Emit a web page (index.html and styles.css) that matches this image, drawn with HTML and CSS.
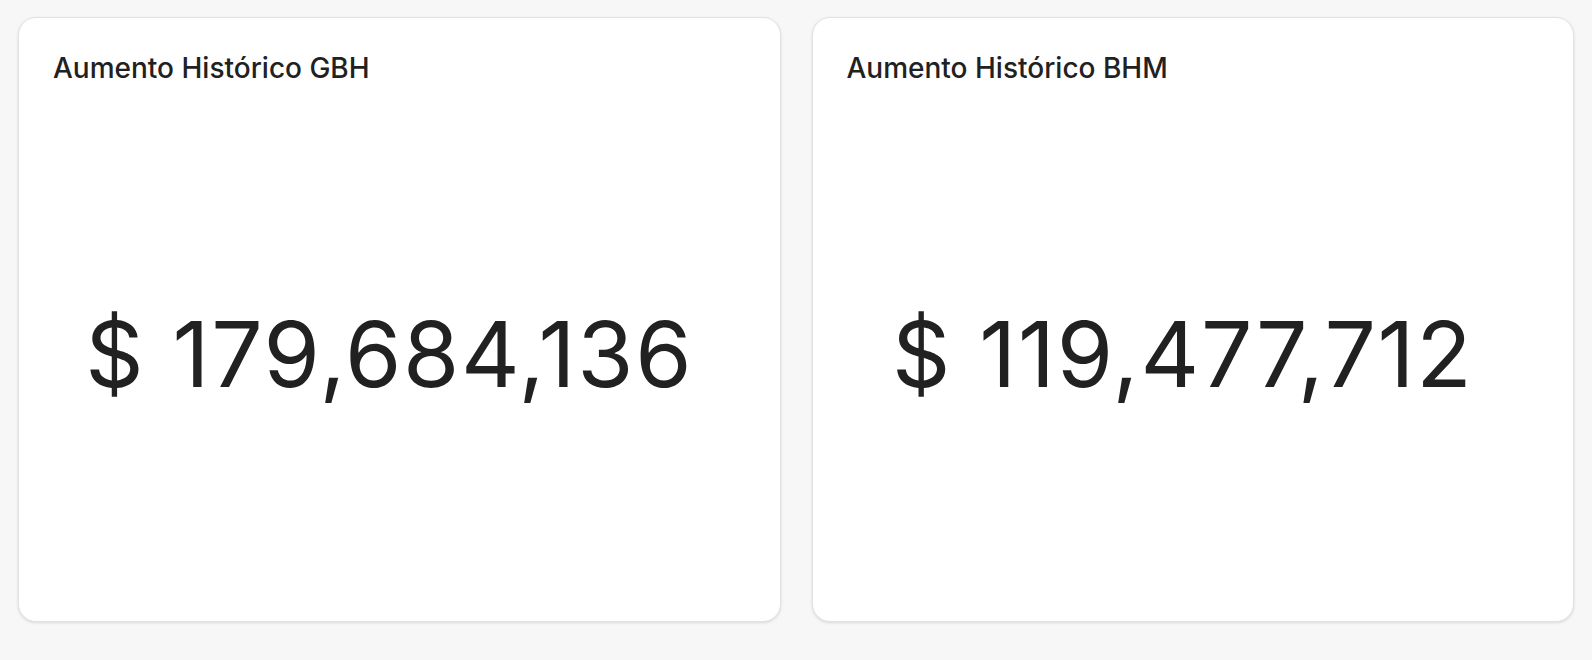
FILE: index.html
```html
<!DOCTYPE html>
<html lang="en">
<head>
    <meta charset="UTF-8">
    <meta name="viewport" content="width=device-width, initial-scale=1.0">
    <title>Aumento Histórico</title>
    <link rel="stylesheet" href="styles.css">
</head>
<body>
    <div class="cards">
        <div class="card">
            <div class="card-title">Aumento Histórico GBH</div>
            <div class="card-value">$ 179,684,136</div>
        </div>
        <div class="card">
            <div class="card-title">Aumento Histórico BHM</div>
            <div class="card-value">$ 119,477,712</div>
        </div>
    </div>
</body>
</html>
```

FILE: styles.css
```css
body {
    margin: 0;
    padding: 17px 18px;
    background-color: #f7f7f7;
    font-family: Inter, "Noto Sans", sans-serif;
    color: #212121;
}
.cards {
    display: flex;
    gap: 31px;
}
.card {
    flex: 1;
    height: 605px;
    box-sizing: border-box;
    background-color: white;
    border: 1px solid #e2e2e2;
    border-radius: 18px;
    box-shadow: 0 1px 3px rgba(0, 0, 0, 0.12);
    padding: 33px 34px 32px;
    display: flex;
    flex-direction: column;
}
.card-title {
    font-size: 28px;
    font-weight: 500;
    line-height: 34px;
}
.card-value {
    flex: 1;
    display: flex;
    align-items: center;
    justify-content: center;
    font-size: 91px;
    font-weight: 400;
    letter-spacing: 1.7px;
    padding: 34px 20px 0 0;
}
```
